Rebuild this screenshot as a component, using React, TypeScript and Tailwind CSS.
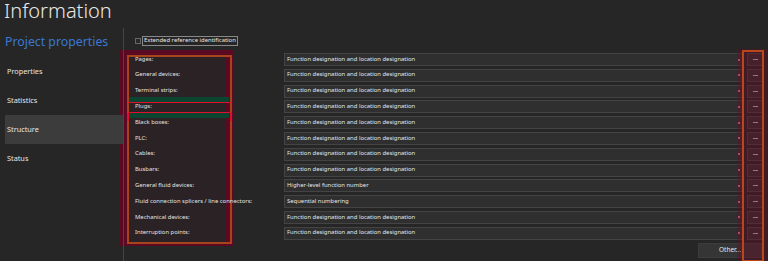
import React from "react";

const rows: [string, string][] = [
  ["Pages:", "Function designation and location designation"],
  ["General devices:", "Function designation and location designation"],
  ["Terminal strips:", "Function designation and location designation"],
  ["Plugs:", "Function designation and location designation"],
  ["Black boxes:", "Function designation and location designation"],
  ["PLC:", "Function designation and location designation"],
  ["Cables:", "Function designation and location designation"],
  ["Busbars:", "Function designation and location designation"],
  ["General fluid devices:", "Higher-level function number"],
  ["Fluid connection splicers / line connectors:", "Sequential numbering"],
  ["Mechanical devices:", "Function designation and location designation"],
  ["Interruption points:", "Function designation and location designation"],
];

const menu = ["Properties", "Statistics", "Structure", "Status"];

export default function App() {
  return (
    <div
      className="relative w-[768px] h-[261px] overflow-hidden bg-[#262626] text-[#e6e6e6]"
      style={{ fontFamily: '"Noto Sans", "Open Sans", Arial, sans-serif' }}
    >
      {/* left annotation (beneath labels) */}
      <div className="absolute left-[120px] top-[50px] w-[113px] h-[196px] bg-[#5c0a24] pointer-events-none" />
      <div className="absolute left-[129px] top-[57px] w-[96px] h-[185px] bg-[#2a2225] pointer-events-none" />
      <div className="absolute left-[127px] top-[55px] w-[105px] h-[189px] border-2 border-[#a8441c] pointer-events-none" />
      <div className="absolute left-[129px] top-[97px] w-[100px] h-[5px] bg-[#0b4430] pointer-events-none" />
      <div className="absolute left-[128px] top-[102px] w-[104px] h-[1px] bg-[#e0102c] pointer-events-none" />
      <div className="absolute left-[128px] top-[112px] w-[104px] h-[1px] bg-[#e0102c] pointer-events-none" />
      <div className="absolute left-[129px] top-[113px] w-[100px] h-[5px] bg-[#0b4430] pointer-events-none" />
      <div className="absolute left-[127px] top-[113px] w-[2px] h-[8px] bg-[#e0102c] pointer-events-none" />
      <div className="absolute left-[230px] top-[113px] w-[2px] h-[8px] bg-[#e0102c] pointer-events-none" />

      <div className="relative">
        <div className="h-[28px] pl-[4px] text-[20px] leading-[21px] font-light text-[#e8e8e8]">
          Information
        </div>
        <div className="flex h-[233px]">
          <div className="w-[124px] border-r border-[#454545] pl-[5px] pt-[6px]">
            <div className="text-[12.3px] leading-[16px] text-[#3a79cf] pb-[7px]">Project properties</div>
            <div className="flex flex-col">
              {menu.map((m) => (
                <div
                  key={m}
                  className={`h-[29px] flex items-center pl-[2px] text-[7.3px] ${
                    m === "Structure" ? "bg-[#3c3c3c]" : ""
                  }`}
                >
                  {m}
                </div>
              ))}
            </div>
          </div>
          <div className="flex-1 flex flex-col pl-[11px] pr-[5px] pt-[8px]">
            <div className="flex items-center h-[10px] gap-[1px]">
              <div className="w-[6px] h-[6px] border border-[#666] bg-[#2a2a2a]" />
              <div className="border border-[#888] px-[1px] h-[10px] flex items-center text-[5.9px] leading-none">
                Extended reference identification
              </div>
            </div>
            <div className="flex flex-col gap-[2.8px] mt-[7px]">
              {rows.map(([l, v]) => (
                <div key={l} className="flex items-center h-[13px]">
                  <div className="w-[149px] text-[5.9px] leading-none text-[#e4e4e4]">{l}</div>
                  <div className="w-[459px] h-[13px] border border-[#444] bg-[#2f2f2f] flex items-center pl-[2px] text-[5.9px] leading-none">
                    <span className="flex-1">{v}</span>
                    <span className="w-[7px] h-[11px] flex items-center justify-center">
                      <span className="w-[2px] h-[2px] bg-[#f06aa0]" />
                    </span>
                  </div>
                  <div className="ml-[4px] w-[16px] h-[13px] border border-[#444] bg-[#303030] flex items-center justify-center">
                    <span className="w-[5px] h-[1px] bg-[#bbb]" />
                  </div>
                </div>
              ))}
            </div>
            <div className="flex justify-end mt-[3px] pr-[1px]">
              <div className="w-[64px] h-[15px] bg-[#353535] border border-[#3c3c3c] flex items-center justify-center text-[6.5px]">
                Other...
              </div>
            </div>
          </div>
        </div>
      </div>

      {/* right annotation (over buttons) */}
      <div className="absolute left-[737px] top-[49px] w-[30px] h-[213px] bg-[#6a0a24]/40 pointer-events-none" />
      <div className="absolute left-[742px] top-[50px] w-[22px] h-[212px] border-2 border-[#b8481c] pointer-events-none" />
    </div>
  );
}
